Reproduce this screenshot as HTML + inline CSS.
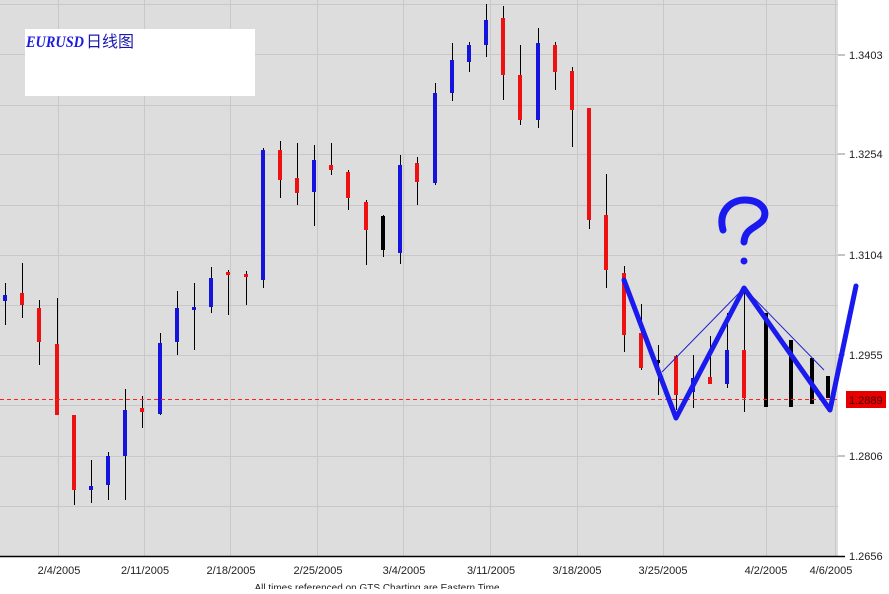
<!DOCTYPE html>
<html><head><meta charset="utf-8"><style>
body{margin:0;width:889px;height:589px;overflow:hidden;background:#fff;font-family:"Liberation Sans",sans-serif;}
</style></head><body>
<svg width="889" height="589" viewBox="0 0 889 589" xmlns="http://www.w3.org/2000/svg" font-family="Liberation Sans, sans-serif">
<rect x="0" y="0" width="838" height="556" fill="#dddddd"/>
<g stroke="#c8c8c8" stroke-width="1">
<line x1="0" y1="4.5" x2="838" y2="4.5"/><line x1="0" y1="54.5" x2="838" y2="54.5"/><line x1="0" y1="105.5" x2="838" y2="105.5"/>
<line x1="0" y1="154.5" x2="838" y2="154.5"/><line x1="0" y1="205.5" x2="838" y2="205.5"/><line x1="0" y1="255.5" x2="838" y2="255.5"/>
<line x1="0" y1="305.5" x2="838" y2="305.5"/><line x1="0" y1="355.5" x2="838" y2="355.5"/><line x1="0" y1="405.5" x2="838" y2="405.5"/>
<line x1="0" y1="456.5" x2="838" y2="456.5"/><line x1="0" y1="506.5" x2="838" y2="506.5"/>
<line x1="58.5" y1="0" x2="58.5" y2="556"/><line x1="144.5" y1="0" x2="144.5" y2="556"/><line x1="230.5" y1="0" x2="230.5" y2="556"/>
<line x1="317.5" y1="0" x2="317.5" y2="556"/><line x1="403.5" y1="0" x2="403.5" y2="556"/><line x1="490.5" y1="0" x2="490.5" y2="556"/>
<line x1="577.5" y1="0" x2="577.5" y2="556"/><line x1="663.5" y1="0" x2="663.5" y2="556"/><line x1="766.5" y1="0" x2="766.5" y2="556"/>
<line x1="835.5" y1="0" x2="835.5" y2="556"/>
</g>
<rect x="838" y="0" width="51" height="589" fill="#fff"/>
<g stroke="#888" stroke-width="1">
<line x1="838" y1="55" x2="845" y2="55"/><line x1="838" y1="154" x2="845" y2="154"/><line x1="838" y1="255" x2="845" y2="255"/>
<line x1="838" y1="355" x2="845" y2="355"/><line x1="838" y1="456" x2="845" y2="456"/>
</g>
<line x1="0" y1="556.5" x2="845" y2="556.5" stroke="#000" stroke-width="1.5"/>
<g font-size="11" fill="#222">
<text x="849" y="59">1.3403</text><text x="849" y="158">1.3254</text><text x="849" y="259">1.3104</text>
<text x="849" y="359">1.2955</text><text x="849" y="460">1.2806</text><text x="849" y="560">1.2656</text>
</g>
<g font-size="11" fill="#222" text-anchor="middle">
<text x="59" y="574">2/4/2005</text><text x="145" y="574">2/11/2005</text><text x="231" y="574">2/18/2005</text>
<text x="318" y="574">2/25/2005</text><text x="404" y="574">3/4/2005</text><text x="491" y="574">3/11/2005</text>
<text x="577" y="574">3/18/2005</text><text x="663" y="574">3/25/2005</text><text x="766" y="574">4/2/2005</text>
<text x="831" y="574">4/6/2005</text>
<text x="377" y="591" font-size="10">All times referenced on GTS Charting are Eastern Time</text>
</g>
<rect x="25" y="29" width="230" height="67" fill="#fff"/>
<text x="26" y="47" font-size="16" font-weight="bold" font-style="italic" fill="#1a1ae0" font-family="Liberation Serif, serif" textLength="58" lengthAdjust="spacingAndGlyphs">EURUSD</text>
<text x="86" y="47" font-size="16" fill="#1a1ab0" font-family="Liberation Sans, Noto Sans CJK SC, sans-serif">日线图</text>
<g stroke="#000" stroke-width="1">
<line x1="5.5" y1="283" x2="5.5" y2="325"/><line x1="22.5" y1="263" x2="22.5" y2="318"/><line x1="39.5" y1="300" x2="39.5" y2="365"/>
<line x1="57.5" y1="298" x2="57.5" y2="415"/><line x1="74.5" y1="415" x2="74.5" y2="505"/><line x1="91.5" y1="460" x2="91.5" y2="503"/>
<line x1="108.5" y1="452" x2="108.5" y2="500"/><line x1="125.5" y1="389" x2="125.5" y2="500"/><line x1="142.5" y1="396" x2="142.5" y2="428"/>
<line x1="160.5" y1="333" x2="160.5" y2="415"/><line x1="177.5" y1="291" x2="177.5" y2="355"/><line x1="194.5" y1="283" x2="194.5" y2="350"/>
<line x1="211.5" y1="267" x2="211.5" y2="313"/><line x1="228.5" y1="270" x2="228.5" y2="315"/><line x1="246.5" y1="271" x2="246.5" y2="305"/>
<line x1="263.5" y1="148" x2="263.5" y2="288"/><line x1="280.5" y1="141" x2="280.5" y2="198"/><line x1="297.5" y1="143" x2="297.5" y2="205"/>
<line x1="314.5" y1="145" x2="314.5" y2="226"/><line x1="331.5" y1="143" x2="331.5" y2="175"/><line x1="348.5" y1="170" x2="348.5" y2="210"/>
<line x1="366.5" y1="200" x2="366.5" y2="265"/><line x1="383.5" y1="215" x2="383.5" y2="257"/><line x1="400.5" y1="155" x2="400.5" y2="264"/>
<line x1="417.5" y1="157" x2="417.5" y2="205"/><line x1="435.5" y1="83" x2="435.5" y2="185"/><line x1="452.5" y1="43" x2="452.5" y2="101"/>
<line x1="469.5" y1="42" x2="469.5" y2="72"/><line x1="486.5" y1="4" x2="486.5" y2="57"/><line x1="503.5" y1="6" x2="503.5" y2="100"/>
<line x1="520.5" y1="45" x2="520.5" y2="125"/><line x1="538.5" y1="28" x2="538.5" y2="128"/><line x1="555.5" y1="42" x2="555.5" y2="90"/>
<line x1="572.5" y1="67" x2="572.5" y2="147"/><line x1="589.5" y1="108" x2="589.5" y2="229"/><line x1="606.5" y1="174" x2="606.5" y2="288"/>
<line x1="624.5" y1="266" x2="624.5" y2="352"/><line x1="641.5" y1="304" x2="641.5" y2="370"/><line x1="658.5" y1="345" x2="658.5" y2="395"/>
<line x1="676.5" y1="355" x2="676.5" y2="410"/><line x1="693.5" y1="355" x2="693.5" y2="408"/><line x1="710.5" y1="336" x2="710.5" y2="383"/>
<line x1="727.5" y1="313" x2="727.5" y2="388"/><line x1="744.5" y1="287" x2="744.5" y2="412"/>
</g>
<g fill="#ee1111">
<rect x="20" y="293" width="4" height="12"/><rect x="37" y="308" width="4" height="34"/><rect x="55" y="344" width="4" height="71"/>
<rect x="72" y="415" width="4" height="75"/><rect x="140" y="408" width="4" height="4"/><rect x="226" y="272" width="4" height="3"/>
<rect x="244" y="274" width="4" height="3"/><rect x="278" y="150" width="4" height="30"/><rect x="295" y="178" width="4" height="15"/>
<rect x="329" y="165" width="4" height="5"/><rect x="346" y="172" width="4" height="26"/><rect x="364" y="202" width="4" height="28"/>
<rect x="415" y="163" width="4" height="19"/><rect x="501" y="18" width="4" height="57"/><rect x="518" y="75" width="4" height="45"/>
<rect x="553" y="45" width="4" height="27"/><rect x="570" y="71" width="4" height="39"/><rect x="587" y="108" width="4" height="112"/>
<rect x="604" y="215" width="4" height="55"/><rect x="622" y="273" width="4" height="62"/><rect x="639" y="333" width="4" height="35"/>
<rect x="674" y="356" width="4" height="39"/><rect x="708" y="377" width="4" height="7"/><rect x="742" y="350" width="4" height="48"/>
</g>
<g fill="#1414dd">
<rect x="3" y="295" width="4" height="6"/><rect x="89" y="486" width="4" height="4"/><rect x="106" y="456" width="4" height="29"/>
<rect x="123" y="410" width="4" height="46"/><rect x="158" y="343" width="4" height="71"/><rect x="175" y="308" width="4" height="34"/>
<rect x="192" y="307" width="4" height="3"/><rect x="209" y="278" width="4" height="29"/><rect x="261" y="150" width="4" height="130"/>
<rect x="312" y="160" width="4" height="32"/><rect x="398" y="165" width="4" height="88"/><rect x="433" y="93" width="4" height="90"/>
<rect x="450" y="60" width="4" height="33"/><rect x="467" y="45" width="4" height="17"/><rect x="484" y="20" width="4" height="25"/>
<rect x="536" y="43" width="4" height="77"/><rect x="691" y="378" width="4" height="14"/><rect x="725" y="350" width="4" height="34"/>
</g>
<g fill="#000">
<rect x="381" y="216" width="4" height="34"/><rect x="657" y="360" width="3" height="3"/>
<rect x="764" y="313" width="4" height="94"/><rect x="789" y="340" width="4" height="67"/><rect x="810" y="358" width="4" height="46"/>
<rect x="826" y="376" width="4" height="22"/>
</g>
<line x1="0" y1="399.5" x2="838" y2="399.5" stroke="#ff2020" stroke-dasharray="4,3" stroke-width="1"/>
<rect x="846" y="391" width="40" height="17" fill="#e80000"/>
<text x="849" y="404" font-size="11" fill="#400">1.2889</text>
<polyline points="662,372 744,288 824,370" fill="none" stroke="#2222cc" stroke-width="1"/>
<polyline points="624,280 676,418 744,288 830,410 856,286" fill="none" stroke="#1a1aee" stroke-width="5" stroke-linejoin="round" stroke-linecap="round"/>
<path d="M723,230 C718,212 730,200 745,200 C760,200 769,210 763,220 C757,228 745,228 744,242" fill="none" stroke="#1a1aee" stroke-width="7" stroke-linecap="round"/>
<circle cx="744" cy="261" r="3.5" fill="#1a1aee"/>
</svg>
</body></html>
